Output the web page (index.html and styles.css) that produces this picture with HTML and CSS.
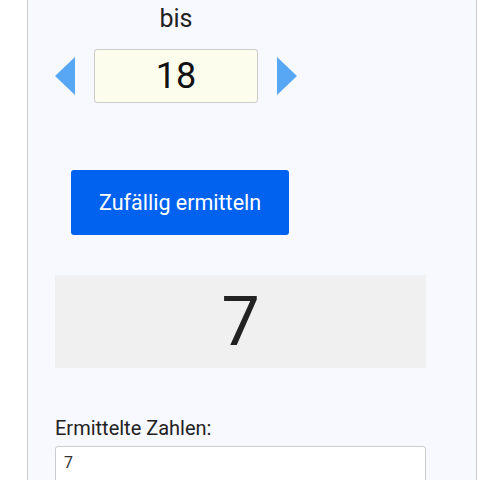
FILE: index.html
```html
<!DOCTYPE html>
<html lang="de">
<head>
    <meta charset="UTF-8">
    <meta name="viewport" content="width=device-width, initial-scale=1.0">
    <title>Zufallszahl</title>
    <link rel="stylesheet" href="styles.css">
</head>
<body>
    <main class="panel">
        <div class="range">
            <span class="range-label">bis</span>
            <button class="arrow" aria-label="weniger">
                <svg width="20" height="38" viewBox="0 0 20 38"><polygon points="20,0 20,38 0,19" fill="#57a7f5"/></svg>
            </button>
            <input class="range-input" type="text" value="18">
            <button class="arrow" aria-label="mehr">
                <svg width="20" height="38" viewBox="0 0 20 38"><polygon points="0,0 0,38 20,19" fill="#57a7f5"/></svg>
            </button>
        </div>

        <button class="roll">Zufällig ermitteln</button>

        <div class="result">7</div>

        <label class="history-label" for="history">Ermittelte Zahlen:</label>
        <textarea id="history" class="history" rows="4">7</textarea>
    </main>
</body>
</html>
```

FILE: styles.css
```css
body {
    margin: 0;
    background-color: #fff;
    font-family: Roboto, "Liberation Sans", sans-serif;
    color: #222;
}

.panel {
    box-sizing: border-box;
    width: 450px;
    min-height: 480px;
    margin-left: 27px;
    padding: 5px 27px 0;
    background-color: #f8f8ff;
    border: 1px solid #ccc;
    border-top: none;
}

.range {
    display: grid;
    grid-template-columns: 20px 164px 20px;
    column-gap: 19px;
    align-items: center;
}

.range-label {
    grid-column: 2;
    grid-row: 1;
    text-align: center;
    font-size: 25px;
    line-height: 28px;
    margin-bottom: 16px;
}

.range > .arrow,
.range-input {
    grid-row: 2;
}

.arrow {
    display: flex;
    padding: 0;
    border: none;
    background: none;
    cursor: pointer;
}

.range-input {
    box-sizing: border-box;
    width: 164px;
    height: 54px;
    padding: 0;
    border: 1px solid #ccc;
    border-radius: 3px;
    background-color: #fdfdee;
    font-family: inherit;
    font-size: 36px;
    color: #111;
    text-align: center;
}

.roll {
    display: block;
    margin: 67px 0 0 16px;
    padding: 0 28px;
    height: 65px;
    border: none;
    border-radius: 3px;
    background-color: #0062ee;
    color: #fff;
    font-family: inherit;
    font-size: 21.5px;
    cursor: pointer;
}

.result {
    margin-top: 40px;
    width: 371px;
    height: 93px;
    display: flex;
    align-items: center;
    justify-content: center;
    background-color: #f0f0f0;
    font-size: 68px;
    color: #222;
}

.history-label {
    display: block;
    margin-top: 48px;
    font-size: 20px;
    line-height: 24px;
}

.history {
    box-sizing: border-box;
    display: block;
    width: 371px;
    margin-top: 6px;
    padding: 6px 8px;
    border: 1px solid #ccc;
    border-radius: 3px;
    background-color: #fff;
    font-family: inherit;
    font-size: 16px;
    color: #333;
    resize: none;
}
```
